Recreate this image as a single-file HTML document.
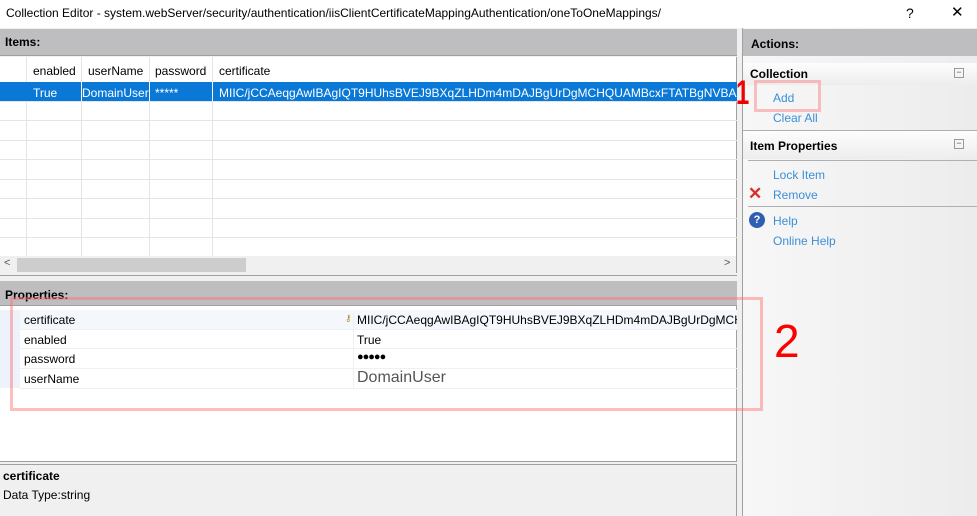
<!DOCTYPE html>
<html><head><style>
*{margin:0;padding:0;box-sizing:border-box}
body{width:977px;height:516px;overflow:hidden;background:#fff;font-family:"Liberation Sans",sans-serif;font-size:12px;color:#000;position:relative}
.a{position:absolute}
.t{white-space:nowrap;overflow:hidden}
.link{color:#3b8fd8;font-size:12px}
</style></head><body>
<div class="a t" style="left:6px;top:6px;font-size:12px">Collection Editor - system.webServer/security/authentication/iisClientCertificateMappingAuthentication/oneToOneMappings/</div>
<div class="a" style="left:906px;top:5px;font-size:14px">?</div>
<div class="a" style="left:951px;top:3px;font-size:15px">✕</div>

<div class="a" style="left:0;top:28px;width:742px;height:488px;background:#f0f0f0"></div>
<div class="a" style="left:0;top:29px;width:737px;height:27px;background:#bebdbf;border-bottom:1px solid #a0a0a0"></div>
<div class="a" style="left:5px;top:35px;font-weight:bold">Items:</div>
<div class="a" style="left:0;top:57px;width:737px;height:199px;background:#fff;border-right:1px solid #a0a0a0"></div>
<svg class="a" style="left:0;top:57px" width="737" height="199">
<g stroke="#e4e4e4" stroke-width="1">
<line x1="26.5" y1="0" x2="26.5" y2="199"/><line x1="81.5" y1="0" x2="81.5" y2="199"/><line x1="149.5" y1="0" x2="149.5" y2="199"/><line x1="212.5" y1="0" x2="212.5" y2="199"/>
<line x1="0" y1="44.5" x2="737" y2="44.5"/><line x1="0" y1="63.5" x2="737" y2="63.5"/><line x1="0" y1="83.5" x2="737" y2="83.5"/><line x1="0" y1="102.5" x2="737" y2="102.5"/><line x1="0" y1="122.5" x2="737" y2="122.5"/><line x1="0" y1="141.5" x2="737" y2="141.5"/><line x1="0" y1="161.5" x2="737" y2="161.5"/><line x1="0" y1="180.5" x2="737" y2="180.5"/>
</g>
<rect x="0" y="25" width="737" height="19" fill="#0a78d7"/>
<line x1="81.5" y1="25" x2="81.5" y2="44" stroke="#fff"/><line x1="149.5" y1="25" x2="149.5" y2="44" stroke="#fff"/><line x1="212.5" y1="25" x2="212.5" y2="44" stroke="#fff"/>
</svg>
<div class="a" style="left:33px;top:64px">enabled</div>
<div class="a" style="left:88px;top:64px">userName</div>
<div class="a" style="left:155px;top:64px">password</div>
<div class="a" style="left:219px;top:64px">certificate</div>
<div class="a" style="left:33px;top:86px;color:#fff">True</div>
<div class="a t" style="left:82px;top:86px;width:67px;color:#fff">DomainUser</div>
<div class="a" style="left:155px;top:86px;color:#fff">*****</div>
<div class="a t" style="left:219px;top:86px;width:518px;color:#fff">MIIC/jCCAeqgAwIBAgIQT9HUhsBVEJ9BXqZLHDm4mDAJBgUrDgMCHQUAMBcxFTATBgNVBAMT</div>
<div class="a" style="left:0;top:256px;width:737px;height:17px;background:#f0f0f0;border-right:1px solid #a0a0a0"></div>
<div class="a" style="left:17px;top:258px;width:229px;height:14px;background:#cdcdcd"></div>
<div class="a" style="left:4px;top:257px;font-size:11px;color:#555">&lt;</div>
<div class="a" style="left:724px;top:257px;font-size:11px;color:#555">&gt;</div>
<div class="a" style="left:0;top:275px;width:737px;height:1px;background:#a0a0a0"></div>

<div class="a" style="left:0;top:281px;width:737px;height:25px;background:#bebdbf;border-bottom:1px solid #a0a0a0"></div>
<div class="a" style="left:5px;top:288px;font-weight:bold">Properties:</div>
<div class="a" style="left:0;top:306px;width:737px;height:156px;background:#fff;border-right:1px solid #a0a0a0;border-bottom:1px solid #a0a0a0"></div>
<div class="a" style="left:0;top:310px;width:20px;height:78px;background:#eef3fb"></div>
<div class="a" style="left:20px;top:310px;width:717px;height:19px;background:#f4f7fc"></div>
<svg class="a" style="left:20px;top:310px" width="717" height="80"><g stroke="#eef0f4"><line x1="0" y1="19.5" x2="717" y2="19.5"/><line x1="0" y1="38.5" x2="717" y2="38.5"/><line x1="0" y1="58.5" x2="717" y2="58.5"/><line x1="0" y1="78.5" x2="717" y2="78.5"/><line x1="333.5" y1="0" x2="333.5" y2="78"/></g></svg>
<div class="a" style="left:24px;top:313px">certificate</div>
<div class="a" style="left:24px;top:333px">enabled</div>
<div class="a" style="left:24px;top:352px">password</div>
<div class="a" style="left:24px;top:372px">userName</div>
<div class="a" style="left:345px;top:313px;font-size:9px;color:#b8901c">⚷</div>
<div class="a t" style="left:357px;top:313px;width:380px">MIIC/jCCAeqgAwIBAgIQT9HUhsBVEJ9BXqZLHDm4mDAJBgUrDgMCH</div>
<div class="a" style="left:357px;top:333px">True</div>
<div class="a" style="left:357px;top:351px;font-size:11px;letter-spacing:-1px">●●●●●</div>
<div class="a" style="left:357px;top:369px;font-size:16px;color:#555">DomainUser</div>

<div class="a" style="left:0;top:464px;width:737px;height:52px;background:#f0f0f0;border-top:1px solid #a0a0a0;border-right:1px solid #a0a0a0"></div>
<div class="a" style="left:3px;top:469px;font-weight:bold">certificate</div>
<div class="a" style="left:3px;top:488px">Data Type:string</div>

<div class="a" style="left:742px;top:28px;width:235px;height:488px;background:linear-gradient(90deg,#f7f7f7,#ececec);border-left:1px solid #a0a0a0"></div>
<div class="a" style="left:743px;top:29px;width:234px;height:27px;background:#bebdbf"></div>
<div class="a" style="left:751px;top:37px;font-weight:bold">Actions:</div>
<div class="a" style="left:743px;top:63px;width:234px;height:22px;background:linear-gradient(#fdfdfd,#ededed)"></div>
<div class="a" style="left:750px;top:67px;font-weight:bold">Collection</div>
<div class="a" style="left:954px;top:68px;width:10px;height:10px;border:1px solid #999;font-size:9px;line-height:7px;text-align:center;color:#555">−</div>
<div class="a link" style="left:773px;top:91px">Add</div>
<div class="a link" style="left:773px;top:111px">Clear All</div>
<div class="a" style="left:743px;top:130px;width:234px;height:1px;background:#b0b0b0"></div>
<div class="a" style="left:743px;top:131px;width:234px;height:28px;background:linear-gradient(#fdfdfd,#ededed)"></div>
<div class="a" style="left:750px;top:139px;font-weight:bold">Item Properties</div>
<div class="a" style="left:954px;top:139px;width:10px;height:10px;border:1px solid #999;font-size:9px;line-height:7px;text-align:center;color:#555">−</div>
<div class="a" style="left:748px;top:160px;width:229px;height:1px;background:#b0b0b0"></div>
<div class="a link" style="left:773px;top:168px">Lock Item</div>
<div class="a" style="left:748px;top:184px;font-size:17px;font-weight:bold;color:#d9302a">✕</div>
<div class="a link" style="left:773px;top:188px">Remove</div>
<div class="a" style="left:748px;top:206px;width:229px;height:1px;background:#b0b0b0"></div>
<div class="a" style="left:749px;top:212px;width:16px;height:16px;border-radius:50%;background:#2f5fb0;color:#fff;font-weight:bold;font-size:11px;text-align:center;line-height:16px">?</div>
<div class="a link" style="left:773px;top:214px">Help</div>
<div class="a link" style="left:773px;top:234px">Online Help</div>

<div class="a" style="left:754px;top:80px;width:67px;height:32px;border:3px solid rgba(255,120,120,0.45)"></div>
<div class="a" style="left:736px;top:76px;font-size:34px;font-weight:bold;color:#e00;line-height:34px;transform:scaleX(0.7);transform-origin:left">1</div>
<div class="a" style="left:10px;top:297px;width:753px;height:114px;border:3px solid rgba(255,110,110,0.45)"></div>
<div class="a" style="left:774px;top:318px;font-size:46px;color:#f00;line-height:46px">2</div>
</body></html>
